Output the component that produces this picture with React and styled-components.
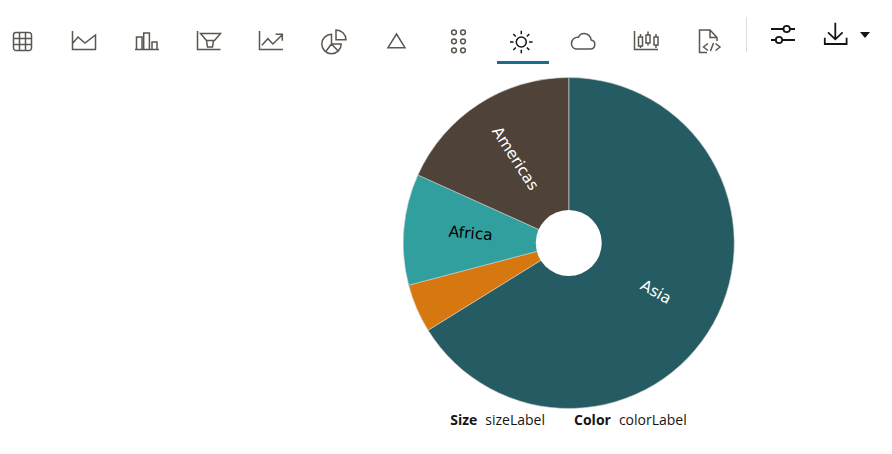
import React from 'react';
import styled, { createGlobalStyle } from 'styled-components';

const GlobalStyles = createGlobalStyle`
    html, body {
        margin: 0;
        padding: 0;
        background: #fff;
        font-family: "Open Sans", "Noto Sans", Arial, sans-serif;
    }
`;

const Page = styled.div`
    width: 892px;
    height: 454px;
    overflow: hidden;
`;

const Toolbar = styled.div`
    display: flex;
    align-items: flex-start;
    height: 64px;
`;

const TabList = styled.div`
    display: flex;
    gap: 10.4px;
    margin-left: -2.2px;
`;

const Tab = styled.button`
    width: 52px;
    height: 64px;
    padding: 21px 16px 0 12px;
    border: 0;
    border-bottom: 3px solid ${(p) => (p.$active ? '#1a6b8f' : 'transparent')};
    background: none;
    box-sizing: border-box;
    cursor: pointer;
    color: ${(p) => (p.$active ? '#161513' : '#5c5650')};

    svg {
        display: block;
    }
`;

const Divider = styled.div`
    width: 1px;
    height: 35px;
    margin: 17px 24.3px 0 10px;
    background: #dcdcdc;
`;

const ActionButton = styled.button`
    width: 24px;
    height: 24px;
    margin-top: 21px;
    padding: 0;
    border: 0;
    background: none;
    color: #161513;
    cursor: pointer;

    svg {
        display: block;
    }
`;

const DownloadButton = styled(ActionButton)`
    margin-left: 28.7px;
`;

const Caret = styled.span`
    width: 0;
    height: 0;
    margin: 32px 0 0 12px;
    border-left: 5.5px solid transparent;
    border-right: 5.5px solid transparent;
    border-top: 6px solid #161513;
`;

const ChartArea = styled.div`
    display: flex;
    flex-direction: column;
    align-items: center;
    padding-left: 245px;
`;

const Pie = styled.svg`
    display: block;
    margin-top: 13px;

    text {
        font-family: "DejaVu Sans", sans-serif;
        font-size: 15.5px;
        text-anchor: middle;
        dominant-baseline: central;
    }
`;

const Legend = styled.div`
    display: flex;
    gap: 29px;
    height: 20px;
    margin-top: 1px;
    font-size: 14px;
    line-height: 20px;
    color: #161513;
`;

const LegendItem = styled.div`
    display: flex;
    gap: 8px;
`;

const LegendName = styled.span`
    font-weight: 700;
`;

const Svg = ({ children, weight = 1.5 }) => (
    <svg
        width="24"
        height="24"
        viewBox="0 0 24 24"
        fill="none"
        stroke="currentColor"
        strokeWidth={weight}
        overflow="visible"
    >
        {children}
    </svg>
);

const tabs = [
    <path key="a" d="M6 3.5h13a2.5 2.5 0 0 1 2.5 2.5v13a2.5 2.5 0 0 1-2.5 2.5H6A2.5 2.5 0 0 1 3.5 19V6A2.5 2.5 0 0 1 6 3.5zM9.5 3.5v18M15.5 3.5v18M3.5 9.5h18M3.5 15.5h18" />,
    <path key="b" d="M.5 2v18.5h23.5M1 14l5-6 7 6 10.5-8v14.5" />,
    <path key="c" d="M0 20.5h24M1.5 20.5V8H7v12.5M8.7 20.5V4h5.7v16.5M17 20.5V13h5v7.5" />,
    <path key="d" d="M.5 2v18.5H23.5M3.5 4.5h20l-6 7H9.5zM9.5 11.5l1 6.5h5l1-6.5" />,
    <path key="e" d="M.5 2v18.5H24M2.9 16.3l6-6.6 5 5.3 9.4-9.3M16.6 5.2h6.7v6.5" />,
    <path key="f" d="M9.5 5.3A9.7 9.7 0 1 0 19.2 15H9.5zM9.5 15l-5.8 7.5M9.5 15l6.6 7M14 1a10 10 0 0 1 10 9.7H14z" />,
    <path key="g" d="M12.5 5L21 18.7H4z" />,
    <g key="h">
        <circle cx="7" cy="3.3" r="2.4" />
        <circle cx="16" cy="3.3" r="2.4" />
        <circle cx="7" cy="12.3" r="2.4" />
        <circle cx="16" cy="12.3" r="2.4" />
        <circle cx="7" cy="21.3" r="2.4" />
        <circle cx="16" cy="21.3" r="2.4" />
    </g>,
    <g key="i">
        <circle cx="12.3" cy="13" r="5" />
        <path d="M12.3 1.7v3.5M12.3 20.8v3.5M1 13h3.5M20.1 13h3.5M4.3 5l2.5 2.5M17.8 18.5l2.5 2.5M20.3 5l-2.5 2.5M6.8 18.5L4.3 21" />
    </g>,
    <path key="j" d="M5 20h14.5a4.5 4.5 0 0 0 .7-8.9 7 7 0 0 0-7.2-6.5 6.2 6.2 0 0 0-5.5 3.6A6.2 6.2 0 0 0 .5 14.5 5.3 5.3 0 0 0 5 20z" />,
    <path key="k" d="M.5 2v18.5H24M6.5 5v3M6.5 17v2M4.5 8h4v9h-4zM14 2.5V6M14 14v2.5M12 6h4v8h-4zM22 5v3M22 16v3M20 8h4v8h-4z" />,
    <path key="l" d="M11 23.5H3.5V1H14l7 7.5V12M14 1v7.5h7M12 14.5L7.5 18l4.5 3.5M17.5 14l-3 8M19.5 14.5L24 18l-4.5 3.5" />,
];

const CX = 165.75;
const CY = 166;
const R = 165.5;

const point = (deg) => {
    const rad = (deg * Math.PI) / 180;
    return [CX + R * Math.sin(rad), CY - R * Math.cos(rad)];
};

const slicePath = (from, to) => {
    const [x1, y1] = point(from);
    const [x2, y2] = point(to);
    const large = to - from > 180 ? 1 : 0;
    return `M${CX} ${CY}L${x1} ${y1}A${R} ${R} 0 ${large} 1 ${x2} ${y2}Z`;
};

const slices = [
    { from: 0, to: 238.2, color: '#255c63' },
    { from: 238.2, to: 255.25, color: '#d6780f' },
    { from: 255.25, to: 294.3, color: '#309f9e' },
    { from: 294.3, to: 360, color: '#4f4238' },
];

const labels = [
    { text: 'Asia', x: 87, y: 49, angle: 29, color: '#fff' },
    { text: 'Africa', x: -98, y: -9.5, angle: 5, color: '#000' },
    { text: 'Americas', x: -53.5, y: -84.5, angle: 57, color: '#fff' },
];

export default function App() {
    return (
        <Page>
            <GlobalStyles />
            <Toolbar>
                <TabList>
                    {tabs.map((icon, i) => (
                        <Tab key={i} $active={i === 8}>
                            <Svg>{icon}</Svg>
                        </Tab>
                    ))}
                </TabList>
                <Divider />
                <ActionButton>
                    <Svg weight={1.8}>
                        <path d="M0 8h12.5M18.5 8H24M0 19h5M11 19h13" />
                        <circle cx="15.7" cy="8" r="3.2" />
                        <circle cx="8" cy="19" r="3.2" />
                    </Svg>
                </ActionButton>
                <DownloadButton>
                    <Svg weight={1.8}>
                        <path d="M11.3 1.7v16M4 11.3l7.3 7 7.3-7M.8 16.7v6.3h21.8v-6.3" />
                    </Svg>
                </DownloadButton>
                <Caret />
            </Toolbar>
            <ChartArea>
                <Pie width="332" height="332" viewBox="0 0 332 332">
                    {slices.map((s) => (
                        <path key={s.color} d={slicePath(s.from, s.to)} fill={s.color} stroke="#d0d0d0" strokeWidth="0.6" />
                    ))}
                    <circle cx={CX} cy={CY} r="33" fill="#fff" />
                    {labels.map((l) => (
                        <text
                            key={l.text}
                            fill={l.color}
                            transform={`translate(${CX + l.x} ${CY + l.y}) rotate(${l.angle})`}
                        >
                            {l.text}
                        </text>
                    ))}
                </Pie>
                <Legend>
                    <LegendItem>
                        <LegendName>Size</LegendName>
                        <span>sizeLabel</span>
                    </LegendItem>
                    <LegendItem>
                        <LegendName>Color</LegendName>
                        <span>colorLabel</span>
                    </LegendItem>
                </Legend>
            </ChartArea>
        </Page>
    );
}
